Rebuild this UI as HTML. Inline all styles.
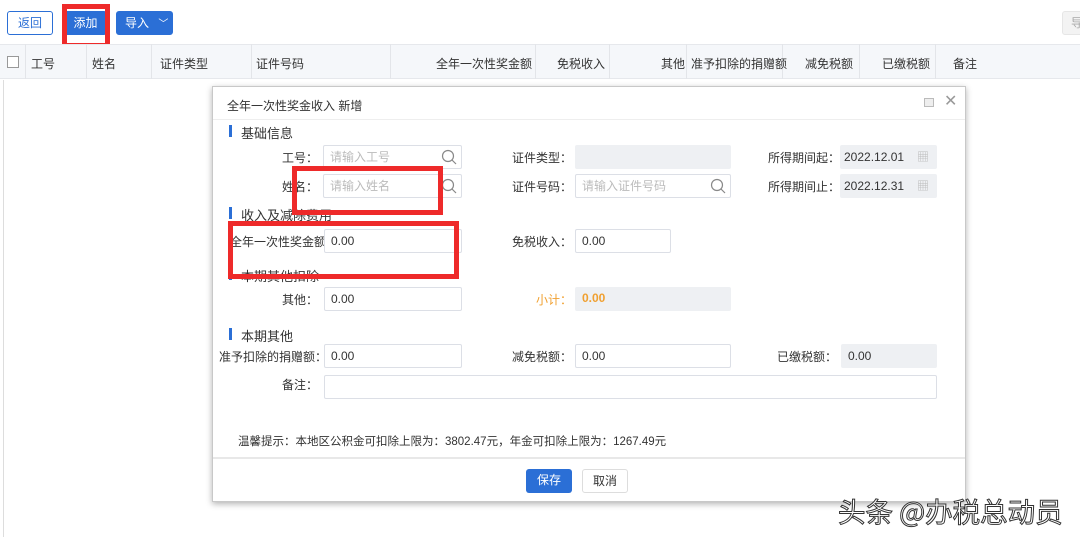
<!DOCTYPE html>
<html><head><meta charset="utf-8"><style>
*{box-sizing:border-box;margin:0;padding:0}
body{width:1080px;height:537px;overflow:hidden;background:#fff;position:relative;font-family:"Liberation Sans","Noto Sans CJK SC",sans-serif;font-size:12px;color:#333}
.a{position:absolute;white-space:nowrap}
.btn{position:absolute;height:24px;line-height:22px;text-align:center;border-radius:3px;font-size:12px}
.hdr{position:absolute;left:0;top:44px;width:1080px;height:35px;background:#f5f7fa;border-top:1px solid #e6e8ec;border-bottom:1px solid #e6e8ec}
.dv{position:absolute;top:44px;width:1px;height:35px;background:#e3e5e9}
.ht{position:absolute;top:55px;font-size:12px;color:#333;white-space:nowrap}
.modal{position:absolute;left:212px;top:86px;width:754px;height:416px;background:#fff;border:1px solid #c8c8c8;box-shadow:0 2px 6px rgba(0,0,0,.3)}
.lab{position:absolute;text-align:right;white-space:nowrap;color:#333}
.in{position:absolute;height:24px;border:1px solid #dcdfe6;border-radius:2px;background:#fff;line-height:22px;padding-left:6px;color:#333}
.ph{color:#bbb}
.g{background:#eef0f3;border-color:#eef0f3}
.sec{position:absolute;font-size:13px;color:#333;white-space:nowrap}
.bar{position:absolute;width:3px;height:12px;background:#2b6fd6}
.red{position:absolute;border:5px solid #ee2a2a}
.srch{position:absolute;right:4px;top:3px;width:16px;height:16px}
</style></head><body>
<div class="btn" style="left:7px;top:11px;width:46px;border:1px solid #2b6fd6;color:#2b6fd6;background:#fff">返回</div>
<div class="btn" style="left:64px;top:11px;width:43px;background:#2b6fd6;color:#fff;border:1px solid #2b6fd6">添加</div>
<div class="btn" style="left:116px;top:11px;width:57px;background:#2b6fd6;color:#fff;border:1px solid #2b6fd6;text-align:left;padding-left:8px">导入 <span style="font-size:10px;margin-left:6px">﹀</span></div>
<div class="btn" style="left:1062px;top:11px;width:30px;background:#f3f3f3;border:1px solid #e6e6e6;color:#aaa;text-align:left;padding-left:8px">导</div>
<div class="red" style="left:62px;top:4px;width:48px;height:44px"></div>

<div class="hdr"></div>
<div class="a" style="left:7px;top:56px;width:12px;height:12px;border:1px solid #999;background:#fff"></div>
<div class="dv" style="left:25px"></div><div class="dv" style="left:86px"></div><div class="dv" style="left:151px"></div><div class="dv" style="left:251px"></div><div class="dv" style="left:390px"></div><div class="dv" style="left:535px"></div><div class="dv" style="left:609px"></div><div class="dv" style="left:686px"></div><div class="dv" style="left:782px"></div><div class="dv" style="left:859px"></div><div class="dv" style="left:935px"></div>
<div class="ht" style="left:31px">工号</div><div class="ht" style="left:92px">姓名</div><div class="ht" style="left:160px">证件类型</div><div class="ht" style="left:256px">证件号码</div>
<div class="ht" style="left:436px">全年一次性奖金额</div><div class="ht" style="left:557px">免税收入</div><div class="ht" style="left:661px">其他</div><div class="ht" style="left:691px">准予扣除的捐赠额</div><div class="ht" style="left:805px">减免税额</div><div class="ht" style="left:882px">已缴税额</div><div class="ht" style="left:953px">备注</div>
<div class="a" style="left:3px;top:80px;width:1px;height:457px;background:#ddd"></div>

<div class="modal">
 <div class="a" style="left:14px;top:10px;font-size:12px">全年一次性奖金收入 新增</div>
 <div class="a" style="left:711px;top:11px;width:10px;height:9px;border:1px solid #bbb;background:#eee"></div>
 <div class="a" style="left:731px;top:4px;font-size:16px;color:#999">✕</div>
 <div class="a" style="left:0;top:32px;width:752px;height:1px;background:#eee"></div>
</div>
<div class="bar" style="left:229px;top:125px"></div><div class="sec" style="left:241px;top:123px">基础信息</div>
<div class="lab" style="left:230px;width:88px;top:149px">工号：</div>
<div class="in ph" style="left:323px;top:145px;width:139px">请输入工号<svg class="srch" viewBox="0 0 16 16"><circle cx="7" cy="7" r="5.5" fill="none" stroke="#888" stroke-width="1.2"/><path d="M11 11l4 4" stroke="#888" stroke-width="1.2"/></svg></div>
<div class="lab" style="left:480px;width:92px;top:149px">证件类型：</div>
<div class="in g" style="left:575px;top:145px;width:156px"></div>
<div class="lab" style="left:740px;width:100px;top:149px">所得期间起：</div>
<div class="in g" style="left:840px;top:145px;width:97px;padding-left:3px">2022.12.01<span style="position:absolute;right:7px;top:0;color:#bbb">▦</span></div>
<div class="lab" style="left:230px;width:88px;top:178px">姓名：</div>
<div class="in ph" style="left:323px;top:174px;width:139px">请输入姓名<svg class="srch" viewBox="0 0 16 16"><circle cx="7" cy="7" r="5.5" fill="none" stroke="#888" stroke-width="1.2"/><path d="M11 11l4 4" stroke="#888" stroke-width="1.2"/></svg></div>
<div class="lab" style="left:480px;width:92px;top:178px">证件号码：</div>
<div class="in ph" style="left:575px;top:174px;width:156px">请输入证件号码<svg class="srch" viewBox="0 0 16 16"><circle cx="7" cy="7" r="5.5" fill="none" stroke="#888" stroke-width="1.2"/><path d="M11 11l4 4" stroke="#888" stroke-width="1.2"/></svg></div>
<div class="lab" style="left:740px;width:100px;top:178px">所得期间止：</div>
<div class="in g" style="left:840px;top:174px;width:97px;padding-left:3px">2022.12.31<span style="position:absolute;right:7px;top:0;color:#bbb">▦</span></div>

<div class="bar" style="left:229px;top:207px"></div><div class="sec" style="left:241px;top:205px">收入及减除费用</div>
<div class="lab" style="left:230px;top:233px">全年一次性奖金额</div>
<div class="in" style="left:324px;top:229px;width:138px">0.00</div>
<div class="lab" style="left:480px;width:92px;top:233px">免税收入：</div>
<div class="in" style="left:575px;top:229px;width:96px">0.00</div>

<div class="bar" style="left:229px;top:268px"></div><div class="sec" style="left:241px;top:266px">本期其他扣除</div>
<div class="lab" style="left:230px;width:88px;top:291px">其他：</div>
<div class="in" style="left:324px;top:287px;width:138px">0.00</div>
<div class="lab" style="left:480px;width:92px;top:291px;color:#f0a030">小计：</div>
<div class="in g" style="left:575px;top:287px;width:156px;color:#f0a030;font-weight:bold;line-height:20px">0.00</div>

<div class="bar" style="left:229px;top:328px"></div><div class="sec" style="left:241px;top:326px">本期其他</div>
<div class="lab" style="left:219px;top:348px">准予扣除的捐赠额：</div>
<div class="in" style="left:324px;top:344px;width:138px">0.00</div>
<div class="lab" style="left:480px;width:92px;top:348px">减免税额：</div>
<div class="in" style="left:575px;top:344px;width:156px">0.00</div>
<div class="lab" style="left:740px;width:97px;top:348px">已缴税额：</div>
<div class="in g" style="left:841px;top:344px;width:96px">0.00</div>
<div class="lab" style="left:230px;width:88px;top:376px">备注：</div>
<div class="in" style="left:324px;top:375px;width:613px"></div>

<div class="a" style="left:238px;top:433px;font-size:11.5px">温馨提示：本地区公积金可扣除上限为：3802.47元，年金可扣除上限为：1267.49元</div>
<div class="a" style="left:213px;top:457px;width:752px;height:2px;background:#e8e8e8"></div>
<div class="btn" style="left:526px;top:469px;width:46px;background:#2b6fd6;color:#fff">保存</div>
<div class="btn" style="left:582px;top:469px;width:46px;border:1px solid #ddd;background:#fff">取消</div>

<div class="red" style="left:292px;top:166px;width:151px;height:49px"></div>
<div class="red" style="left:228px;top:221px;width:231px;height:58px"></div>

<div class="a" style="left:838px;top:490px;font-size:27.5px;color:#fff;-webkit-text-stroke:1px #333;font-family:'Noto Sans CJK SC',sans-serif">头条 @办税总动员</div>
</body></html>
